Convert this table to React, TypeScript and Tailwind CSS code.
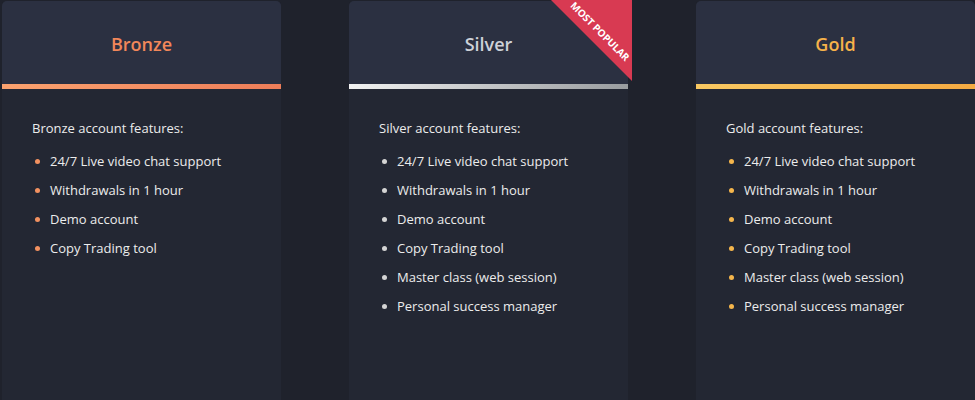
import React from "react";

type Plan = {
  name: string;
  titleClass: string;
  barClass: string;
  bulletClass: string;
  features: string[];
  popular?: boolean;
};

const base = [
  "24/7 Live video chat support",
  "Withdrawals in 1 hour",
  "Demo account",
  "Copy Trading tool",
];
const extra = ["Master class (web session)", "Personal success manager"];

const plans: Plan[] = [
  {
    name: "Bronze",
    titleClass: "text-[#f2875a]",
    barClass: "bg-gradient-to-r from-[#fba26f] to-[#ed7d59]",
    bulletClass: "bg-[#f29160]",
    features: base,
  },
  {
    name: "Silver",
    titleClass: "text-[#cdd1d8]",
    barClass: "bg-gradient-to-r from-[#f2f2f2] to-[#999c9f]",
    bulletClass: "bg-[#d4d4d4]",
    features: [...base, ...extra],
    popular: true,
  },
  {
    name: "Gold",
    titleClass: "text-[#f6b24a]",
    barClass: "bg-gradient-to-r from-[#f9c862] to-[#f5aa42]",
    bulletClass: "bg-[#f5b64c]",
    features: [...base, ...extra],
  },
];

function Card({ plan }: { plan: Plan }) {
  return (
    <div className="relative w-[279px] h-[420px] shrink-0">
      <div className="w-full h-full rounded-t-[5px] overflow-hidden bg-[#232733]">
        <div className="h-[83px] bg-[#2b3041] flex items-center justify-center pt-[2px]">
          <span className={`text-[18px] font-semibold leading-[24px] ${plan.titleClass}`}>
            {plan.name}
          </span>
        </div>
        <div className={`h-[5px] ${plan.barClass}`} />
        <div className="pl-[30px] pt-[29px]">
          <div className="text-[13px] leading-[20px] text-[#ececec]">
            {plan.name} account features:
          </div>
          <ul className="mt-[13px] flex flex-col gap-[9px]">
            {plan.features.map((f) => (
              <li key={f} className="flex items-center h-[20px] text-[13px] leading-[20px] text-[#ececec]">
                <span className={`ml-[3px] w-[5px] h-[5px] rounded-full ${plan.bulletClass}`} />
                <span className="ml-[10px]">{f}</span>
              </li>
            ))}
          </ul>
        </div>
      </div>
      {plan.popular && (
        <div className="absolute top-[-1px] right-[-4px] w-[81px] h-[81px]">
          <div className="absolute inset-0 bg-[#d83a52] [clip-path:polygon(0_0,100%_0,100%_100%)]" />
          <span className="absolute left-[5px] top-[25px] w-[88px] text-center text-[10px] font-bold leading-[13px] text-white rotate-45 whitespace-nowrap">
            MOST POPULAR
          </span>
        </div>
      )}
    </div>
  );
}

export default function App() {
  return (
    <div
      className="w-[975px] h-[400px] overflow-hidden bg-[#1f222c] pl-[2px] pt-[1px] flex gap-[68px]"
      style={{ fontFamily: '"Open Sans", "Noto Sans", sans-serif' }}
    >
      {plans.map((p) => (
        <Card key={p.name} plan={p} />
      ))}
    </div>
  );
}
